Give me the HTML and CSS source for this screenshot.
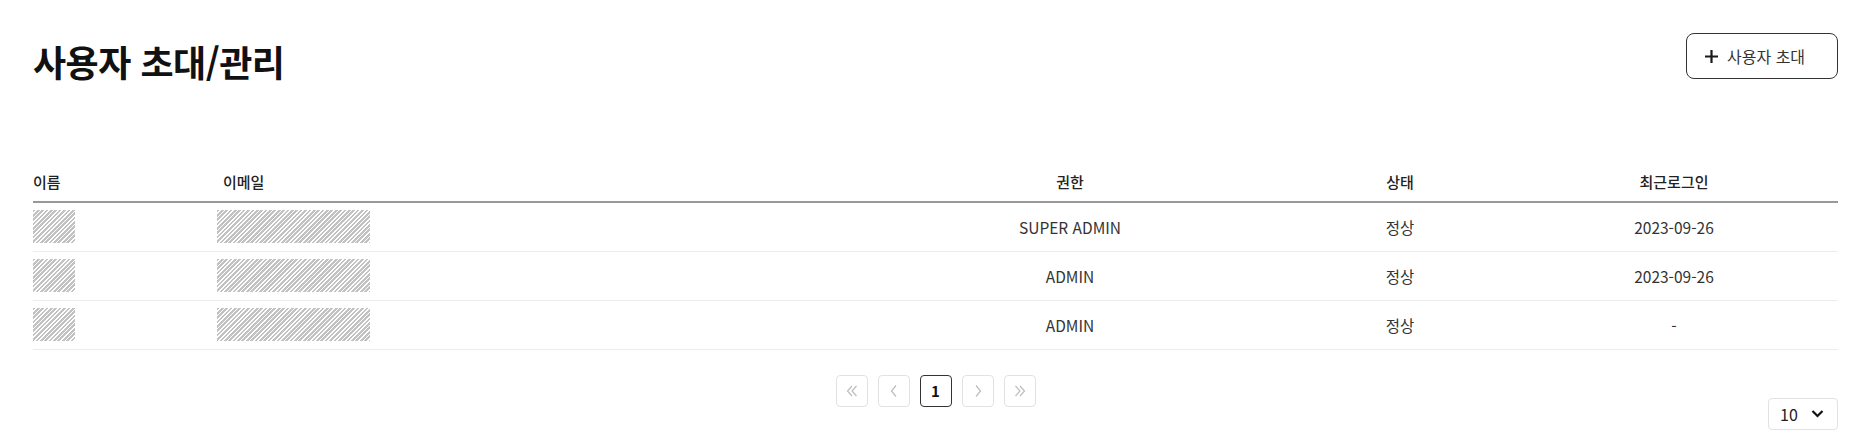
FILE: index.html
```html
<!DOCTYPE html>
<html lang="ko">
<head>
<meta charset="utf-8">
<title>사용자 초대/관리</title>
<link rel="stylesheet" href="styles.css">
</head>
<body>
<div class="page">
  <div class="top">
    <h1 class="title">사용자 초대/관리</h1>
    <button class="invite-btn" type="button">
      <svg class="plus" width="15" height="15" viewBox="0 0 15 15"><path d="M7.5 1v13M1 7.5h13" stroke="#1a1a1a" stroke-width="2.2" fill="none"/></svg>
      <span>사용자 초대</span>
    </button>
  </div>

  <table class="users">
    <colgroup>
      <col class="c-name"><col class="c-email"><col class="c-role"><col class="c-status"><col class="c-login">
    </colgroup>
    <thead>
      <tr>
        <th class="left">이름</th>
        <th class="left">이메일</th>
        <th>권한</th>
        <th>상태</th>
        <th>최근로그인</th>
      </tr>
    </thead>
    <tbody>
      <tr>
        <td class="left"><span class="redact r-name"></span></td>
        <td class="left"><span class="redact r-email"></span></td>
        <td>SUPER ADMIN</td>
        <td>정상</td>
        <td>2023-09-26</td>
      </tr>
      <tr>
        <td class="left"><span class="redact r-name"></span></td>
        <td class="left"><span class="redact r-email"></span></td>
        <td>ADMIN</td>
        <td>정상</td>
        <td>2023-09-26</td>
      </tr>
      <tr>
        <td class="left"><span class="redact r-name"></span></td>
        <td class="left"><span class="redact r-email"></span></td>
        <td>ADMIN</td>
        <td>정상</td>
        <td class="dash">-</td>
      </tr>
    </tbody>
  </table>

  <div class="footer">
    <div class="spacer"></div>
    <nav class="pager">
      <button class="pg" type="button" aria-label="first">
        <svg width="16" height="16" viewBox="0 0 16 16"><path d="M8 3L3.5 8 8 13M12.5 3L8 8l4.5 5" stroke="#bdbdbd" stroke-width="1.2" fill="none"/></svg>
      </button>
      <button class="pg" type="button" aria-label="prev">
        <svg width="16" height="16" viewBox="0 0 16 16"><path d="M10 2.5L5.5 8 10 13.5" stroke="#bdbdbd" stroke-width="1.2" fill="none"/></svg>
      </button>
      <button class="pg active" type="button">1</button>
      <button class="pg" type="button" aria-label="next">
        <svg width="16" height="16" viewBox="0 0 16 16"><path d="M6 2.5L10.5 8 6 13.5" stroke="#bdbdbd" stroke-width="1.2" fill="none"/></svg>
      </button>
      <button class="pg" type="button" aria-label="last">
        <svg width="16" height="16" viewBox="0 0 16 16"><path d="M3.5 3L8 8l-4.5 5M8 3l4.5 5L8 13" stroke="#bdbdbd" stroke-width="1.2" fill="none"/></svg>
      </button>
    </nav>
    <div class="size-wrap">
      <div class="size-select">
        <span>10</span>
        <svg width="13" height="13" viewBox="0 0 13 13"><path d="M1.5 4L6.5 9l5-5" stroke="#111" stroke-width="2.2" fill="none"/></svg>
      </div>
    </div>
  </div>
</div>
</body>
</html>
```

FILE: styles.css
```css
* { box-sizing: border-box; }

html, body {
  margin: 0;
  padding: 0;
  background: #fff;
}

body {
  font-family: "Noto Sans CJK KR", "Noto Sans", sans-serif;
  color: #222;
}

.page {
  padding: 33px 24px 0 33px;
}

.top {
  display: flex;
  justify-content: space-between;
  align-items: center;
  height: 46px;
}

.title {
  margin: 0;
  font-size: 36px;
  font-weight: 700;
  line-height: 46px;
  letter-spacing: -0.5px;
  color: #111;
  position: relative;
  top: 5px;
}

.invite-btn {
  display: flex;
  align-items: center;
  gap: 8px;
  height: 46px;
  width: 152px;
  padding: 0 0 0 17px;
  border: 1.5px solid #333;
  border-radius: 8px;
  background: #fff;
  font-family: inherit;
  font-size: 16px;
  color: #333;
}

.users {
  width: 100%;
  margin-top: 83px;
  border-collapse: collapse;
  table-layout: fixed;
}

.c-name { width: 190px; }
.c-email { width: 627px; }
.c-role { width: 440px; }
.c-status { width: 220px; }
.c-login { width: auto; }

.users th {
  height: 40px;
  padding: 0;
  font-size: 15px;
  font-weight: 500;
  color: #222;
  text-align: center;
  vertical-align: middle;
  border-bottom: 2px solid #999;
}

.users td {
  height: 49px;
  padding: 0;
  font-size: 15.5px;
  color: #333;
  text-align: center;
  vertical-align: middle;
  border-bottom: 1px solid #ececec;
}

.users .left { text-align: left; }

.redact {
  display: inline-block;
  height: 33px;
  vertical-align: middle;
  background: repeating-linear-gradient(135deg, #c2c2c2 0 1.9px, #fff 1.9px 3.1px);
}

.r-name { width: 42px; }
.r-email { width: 153px; margin-left: -6px; }

.dash { color: #777; }

.footer {
  display: grid;
  grid-template-columns: 1fr auto 1fr;
  margin-top: 25px;
}

.pager {
  display: flex;
  gap: 10px;
  align-self: start;
}

.pg {
  width: 32px;
  height: 32px;
  padding: 0;
  display: flex;
  align-items: center;
  justify-content: center;
  border: 1px solid #e2e2e2;
  border-radius: 4px;
  background: #fff;
  font-family: inherit;
  font-size: 15px;
  font-weight: 700;
  color: #111;
}

.pg.active {
  border: 1.5px solid #333;
}

.size-wrap {
  display: flex;
  justify-content: flex-end;
  padding-top: 23px;
}

.size-select {
  display: flex;
  align-items: center;
  justify-content: space-between;
  width: 70px;
  height: 32px;
  padding: 0 13px 0 11px;
  border: 1px solid #e2e2e2;
  border-radius: 4px;
  font-size: 16px;
  color: #222;
}
```
